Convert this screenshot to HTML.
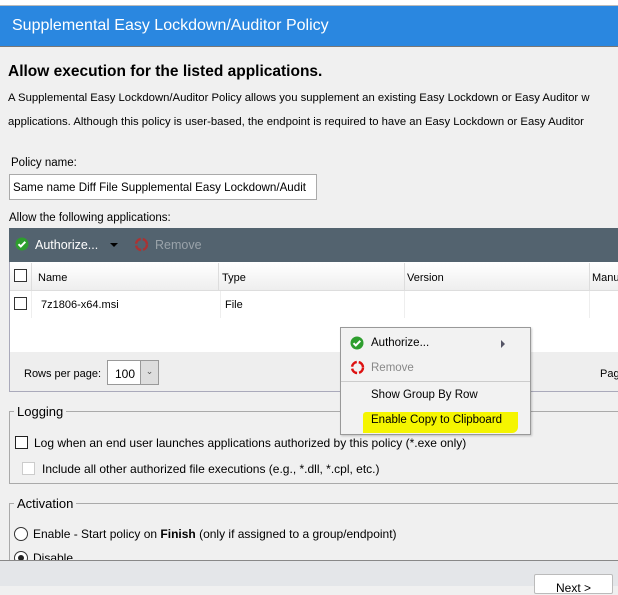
<!DOCTYPE html>
<html><head><meta charset="utf-8"><style>
*{margin:0;padding:0;box-sizing:border-box}
body{width:618px;height:586px;overflow:hidden;background:#f0f0f0;font-family:"Liberation Sans",sans-serif;font-size:12px;color:#000;position:relative}
.a{position:absolute;white-space:nowrap}
.cb{position:absolute;width:13px;height:13px;border:1px solid #333;background:#fff}
</style></head><body>
<div class="a" style="left:0;top:0;width:618px;height:6px;background:#fff;border-bottom:1px solid #bbb"></div>
<div class="a" style="left:0;top:6px;width:618px;height:41px;background:#2a87e0;border-bottom:1px solid #777"></div>
<div class="a" style="left:12px;top:17px;color:#fff;font-size:16px">Supplemental Easy Lockdown/Auditor Policy</div>
<div class="a" style="left:8px;top:63px;font-size:15.5px;font-weight:bold">Allow execution for the listed applications.</div>
<div class="a" style="left:8px;top:92px;font-size:11.3px">A Supplemental Easy Lockdown/Auditor Policy allows you supplement an existing Easy Lockdown or Easy Auditor w</div>
<div class="a" style="left:8px;top:116px;font-size:11.3px">applications. Although this policy is user-based, the endpoint is required to have an Easy Lockdown or Easy Auditor</div>
<div class="a" style="left:11px;top:157px;font-size:11.5px">Policy name:</div>
<div class="a" style="left:9px;top:174px;width:308px;height:26px;background:#fff;border:1px solid #aaa;padding:6px 0 0 3px;font-size:11.6px;overflow:hidden">Same name Diff File Supplemental Easy Lockdown/Audit</div>
<div class="a" style="left:9px;top:212px;font-size:11.5px">Allow the following applications:</div>
<div class="a" style="left:9px;top:228px;width:609px;height:34px;background:#53636f"></div>
<svg class="a" style="left:15px;top:237px" width="14" height="14"><circle cx="7" cy="7" r="6.5" fill="#2e9e2e"/><path d="M3.5 7.2l2.3 2.3 4.5-4.7" stroke="#fff" stroke-width="2" fill="none"/></svg>
<div class="a" style="left:35px;top:238px;color:#fff;font-size:12.5px">Authorize...</div>
<div class="a" style="left:110px;top:243px;width:0;height:0;border-left:4px solid transparent;border-right:4px solid transparent;border-top:4px solid #000"></div>
<svg class="a" style="left:134px;top:237px" width="15" height="15"><circle cx="7.5" cy="7.5" r="5.5" stroke="#a33" stroke-width="2.5" fill="none" stroke-dasharray="7 2"/></svg>
<div class="a" style="left:155px;top:238px;color:#9aa3aa;font-size:12.5px">Remove</div>
<div class="a" style="left:9px;top:262px;width:609px;height:130px;background:#fff;border-left:1px solid #aab"></div>
<div class="a" style="left:10px;top:263px;width:608px;height:28px;background:linear-gradient(#fff,#eee);border-bottom:1px solid #ddd"></div>
<div class="cb" style="left:14px;top:269px"></div>
<div class="a" style="left:31px;top:263px;width:1px;height:28px;background:#ddd"></div>
<div class="a" style="left:38px;top:272px;font-size:11px">Name</div>
<div class="a" style="left:218px;top:263px;width:1px;height:28px;background:#ddd"></div>
<div class="a" style="left:222px;top:272px;font-size:11px">Type</div>
<div class="a" style="left:404px;top:263px;width:1px;height:28px;background:#ddd"></div>
<div class="a" style="left:407px;top:272px;font-size:11px">Version</div>
<div class="a" style="left:589px;top:263px;width:1px;height:28px;background:#ddd"></div>
<div class="a" style="left:592px;top:272px;font-size:11px">Manu</div>
<div class="cb" style="left:14px;top:297px"></div>
<div class="a" style="left:31px;top:291px;width:1px;height:27px;background:#eee"></div>
<div class="a" style="left:41px;top:299px;font-size:11px">7z1806-x64.msi</div>
<div class="a" style="left:220px;top:291px;width:1px;height:27px;background:#eee"></div>
<div class="a" style="left:225px;top:299px;font-size:11px">File</div>
<div class="a" style="left:404px;top:291px;width:1px;height:27px;background:#eee"></div>
<div class="a" style="left:589px;top:291px;width:1px;height:27px;background:#eee"></div>
<div class="a" style="left:10px;top:352px;width:608px;height:40px;background:#eeeeee;border-bottom:1px solid #aab"></div>
<div class="a" style="left:24px;top:368px;font-size:11px">Rows per page:</div>
<div class="a" style="left:107px;top:360px;width:52px;height:25px;border:1px solid #999;background:#fff"></div>
<div class="a" style="left:115px;top:367px;font-size:12px">100</div>
<div class="a" style="left:140px;top:361px;width:18px;height:23px;background:#ddd;border-left:1px solid #999;text-align:center;font-size:9px;padding-top:5px;color:#555">&#8964;</div>
<div class="a" style="left:600px;top:368px;font-size:11px">Pag</div>
<div class="a" style="left:9px;top:411px;width:620px;height:73px;border:1px solid #aaa"></div>
<div class="a" style="left:14px;top:404px;padding:0 3px;background:#f0f0f0;font-size:13px">Logging</div>
<div class="cb" style="left:15px;top:436px;border-color:#222"></div>
<div class="a" style="left:34px;top:436px;font-size:12px">Log when an end user launches applications authorized by this policy (*.exe only)</div>
<div class="cb" style="left:22px;top:462px;border-color:#ccc"></div>
<div class="a" style="left:42px;top:462px;font-size:12px">Include all other authorized file executions (e.g., *.dll, *.cpl, etc.)</div>
<div class="a" style="left:9px;top:503px;width:620px;height:80px;border:1px solid #aaa"></div>
<div class="a" style="left:14px;top:496px;padding:0 3px;background:#f0f0f0;font-size:13px">Activation</div>
<div class="a" style="left:14px;top:527px;width:14px;height:14px;border:1px solid #333;border-radius:50%;background:#fff"></div>
<div class="a" style="left:33px;top:527px;font-size:12px">Enable - Start policy on <b>Finish</b> (only if assigned to a group/endpoint)</div>
<div class="a" style="left:14px;top:551px;width:14px;height:14px;border:1px solid #333;border-radius:50%;background:#fff"><div style="margin:3px;width:6px;height:6px;border-radius:50%;background:#222"></div></div>
<div class="a" style="left:33px;top:551px;font-size:12px">Disable</div>
<div class="a" style="left:0;top:560px;width:618px;height:26px;background:#e4e6e9;border-top:1px solid #888"></div>
<div class="a" style="left:534px;top:574px;width:79px;height:20px;background:#fff;border:1px solid #bbb;border-radius:2px;text-align:center;padding-top:6px;font-size:12px">Next &gt;</div>
<div class="a" style="left:340px;top:327px;width:191px;height:108px;background:#f2f2f2;border:1px solid #999;box-shadow:1px 1px 2px rgba(0,0,0,.2)"></div>
<svg class="a" style="left:350px;top:336px" width="14" height="14"><circle cx="7" cy="7" r="6.5" fill="#2e9e2e"/><path d="M3.5 7.2l2.3 2.3 4.5-4.7" stroke="#fff" stroke-width="2" fill="none"/></svg>
<div class="a" style="left:371px;top:337px;font-size:11.5px">Authorize...</div>
<div class="a" style="left:501px;top:340px;width:0;height:0;border-top:4px solid transparent;border-bottom:4px solid transparent;border-left:4px solid #556"></div>
<svg class="a" style="left:350px;top:360px" width="15" height="15"><circle cx="7.5" cy="7.5" r="5.5" stroke="#d11" stroke-width="2.5" fill="none" stroke-dasharray="7 2"/></svg>
<div class="a" style="left:371px;top:362px;font-size:11.5px;color:#888">Remove</div>
<div class="a" style="left:341px;top:381px;width:189px;height:1px;background:#ccc"></div>
<div class="a" style="left:371px;top:389px;font-size:11.5px">Show Group By Row</div>
<div class="a" style="left:363px;top:412px;width:155px;height:21px;background:#f5f500;border-radius:3px 0 6px 0"></div>
<div class="a" style="left:371px;top:414px;font-size:11.5px">Enable Copy to Clipboard</div>
</body></html>
